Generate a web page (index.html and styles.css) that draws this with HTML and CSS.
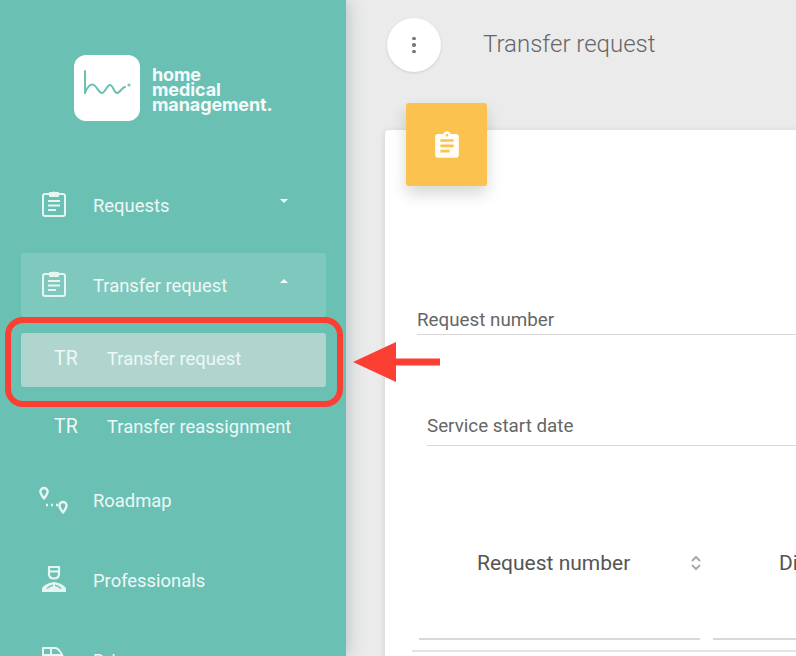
FILE: index.html
```html
<!DOCTYPE html>
<html lang="en">
<head>
    <meta charset="UTF-8">
    <meta name="viewport" content="width=device-width, initial-scale=1.0">
    <title>Transfer request - Home Medical Management</title>
    <link rel="stylesheet" href="styles.css">
</head>
<body>
    <aside class="sidebar">
        <div class="brand">
            <div class="brand-mark">
                <svg width="50" height="36" viewBox="0 0 50 36" fill="none" stroke="#6bc0b4" stroke-width="2" stroke-linecap="round" stroke-linejoin="round">
                    <path d="M3 1v22"/>
                    <path d="M3 23C5 17 9 13 12 15S17 23 20 23 25 15 28 15 32 23 35 23 40 17 43 17"/>
                    <circle cx="47" cy="15" r=".6"/>
                </svg>
            </div>
            <div class="brand-name">home<br>medical<br>management.</div>
        </div>

        <nav class="nav">
            <a class="nav-item">
                <svg class="nav-icon" viewBox="0 0 24 27"><rect x="1" y="4" width="22" height="22" rx="2"/><path d="M8 6V3h3a1.500 1.500 0 0 1 2 0h3v3zM6 11h12M6 15.500h12M6 20h8"/></svg>
                <span class="nav-label">Requests</span>
                <span class="caret"></span>
            </a>
            <a class="nav-item open">
                <svg class="nav-icon" viewBox="0 0 24 27"><rect x="1" y="4" width="22" height="22" rx="2"/><path d="M8 6V3h3a1.500 1.500 0 0 1 2 0h3v3zM6 11h12M6 15.500h12M6 20h8"/></svg>
                <span class="nav-label">Transfer request</span>
                <span class="caret up"></span>
            </a>
            <a class="sub-item selected"><span class="sub-code">TR</span>Transfer request</a>
            <a class="sub-item last"><span class="sub-code">TR</span>Transfer reassignment</a>
            <a class="nav-item">
                <svg class="nav-icon icon-roadmap" viewBox="0 0 30 30">
                    <path d="M6 2a3.600 3.600 0 0 0-3.600 3.600C2.400 8 6 12.500 6 12.500S9.600 8 9.600 5.600A3.600 3.600 0 0 0 6 2z"/>
                    <path d="M25 16a3.600 3.600 0 0 0-3.600 3.600c0 2.400 3.600 6.900 3.600 6.900s3.600-4.500 3.600-6.900A3.600 3.600 0 0 0 25 16z"/>
                    <path class="dots" d="M8 19h2M13 19h2M18 19h2"/>
                </svg>
                <span class="nav-label">Roadmap</span>
            </a>
            <a class="nav-item">
                <svg class="nav-icon icon-person" viewBox="0 0 26 28">
                    <path d="M8 2h10v7c0 3-2 4.500-5 4.500S8 12 8 9zM8 6.500h10"/>
                    <path class="solid" d="M1 27v-3c0-3 6-6 12-7 6 1 12 4 12 7v3z"/>
                    <path class="cut" d="M6 23.500c2-2 4-3 6-3.300M14 20.200c2 .3 4 1.300 6 3.300"/>
                </svg>
                <span class="nav-label">Professionals</span>
            </a>
            <a class="nav-item">
                <svg class="nav-icon" viewBox="0 0 24 27"><path d="M1 20V3h12c4 0 6 4 8 9v8zM1 10h20M9 3v7"/></svg>
                <span class="nav-label">Drivers</span>
            </a>
        </nav>
    </aside>

    <main class="content">
        <header class="topbar">
            <button class="menu-btn"><span></span><span></span><span></span></button>
            <h1 class="page-title">Transfer request</h1>
        </header>

        <section class="card">
            <div class="card-tile">
                <svg width="24" height="29" viewBox="3 0 18 22"><path fill="#fffdf6" d="M19 3h-4.180C14.400 1.840 13.300 1 12 1s-2.400.840-2.820 2H5c-1.100 0-2 .900-2 2v14c0 1.100.900 2 2 2h14c1.100 0 2-.900 2-2V5c0-1.100-.900-2-2-2zm-7 0c.550 0 1 .450 1 1s-.450 1-1 1-1-.450-1-1 .450-1 1-1zm2 14H7v-2h7v2zm3-4H7v-2h10v2zm0-4H7V7h10v2z"/></svg>
            </div>

            <div class="field field-number">Request number</div>
            <div class="field field-date">Service start date</div>

            <div class="table-head">
                <div class="col col-first">Request number
                    <svg class="sort" width="12" height="18" viewBox="0 0 12 18" fill="none" stroke="#aaa" stroke-width="2"><path d="M2 7l4-4 4 4M2 11l4 4 4-4"/></svg>
                </div>
                <div class="col col-second">Di</div>
            </div>
            <div class="filters">
                <div class="filter filter-first"></div>
                <div class="filter filter-second"></div>
            </div>
            <div class="table-rule"></div>
        </section>
    </main>

    <div class="callout-box"></div>
    <svg class="callout-arrow" width="88" height="40" viewBox="0 0 88 40"><path fill="#fb3f33" d="M0 20L43 0v16.500h44v7H43V40z"/></svg>
</body>
</html>
```

FILE: styles.css
```css
:root {
    --teal: #6bc0b4;
    --grey-bg: #ebebeb;
    --line: #d8d8d8;
    --red: #fb3f33;
}

* {
    box-sizing: border-box;
}

body {
    margin: 0;
    width: 796px;
    height: 656px;
    overflow: hidden;
    display: flex;
    background: var(--grey-bg);
    font-family: Roboto, sans-serif;
}

.sidebar {
    flex: 0 0 346px;
    height: 656px;
    overflow: hidden;
    background: var(--teal);
    box-shadow: 0 0 18px rgba(60, 90, 110, 0.35);
    position: relative;
    z-index: 1;
}

.brand {
    display: flex;
    align-items: center;
    gap: 12px;
    padding: 55px 0 0 74px;
}

.brand-mark {
    width: 66px;
    height: 66px;
    background: #fff;
    border-radius: 12px;
    display: flex;
    align-items: center;
    justify-content: center;
}

.brand-name {
    margin-top: 2px;
    color: #f4fbfa;
    font-family: Inter, sans-serif;
    font-size: 18px;
    font-weight: 700;
    line-height: 15px;
    letter-spacing: -0.1px;
}

.nav {
    margin-top: 52px;
    padding: 0 20px 0 21px;
    display: flex;
    flex-direction: column;
}

.nav-item {
    height: 64px;
    margin-bottom: 16px;
    display: flex;
    align-items: center;
    position: relative;
    padding-left: 21px;
    border-radius: 3px;
    color: #eef8f6;
    flex-shrink: 0;
}

.nav-item.open {
    background: rgba(255, 255, 255, 0.13);
}

.nav-icon {
    width: 24px;
    height: 27px;
    margin-top: -3px;
    fill: none;
    stroke: #e6f5f2;
    stroke-width: 2;
    stroke-linejoin: round;
    flex-shrink: 0;
}

.icon-roadmap {
    width: 30px;
    height: 30px;
    margin: 1px -2px 0 -4px;
    stroke-width: 2.4;
}

.icon-roadmap .dots {
    stroke-width: 2.600;
}

.icon-person {
    width: 26px;
    height: 28px;
    margin: -2px -1px 0 -1px;
    stroke-width: 2.2;
}

.icon-person .solid {
    fill: #e6f5f2;
    stroke: none;
}

.icon-person .cut {
    stroke: var(--teal);
    stroke-width: 1.400;
}

.nav-label {
    margin-left: 27px;
    font-size: 18.4px;
    font-weight: 400;
}

.caret {
    position: absolute;
    right: 38px;
    top: 26px;
    border-left: 4px solid transparent;
    border-right: 4px solid transparent;
    border-top: 4px solid #f4fbfa;
}

.caret.up {
    border-top: 0;
    border-bottom: 4px solid #f4fbfa;
}

.sub-item {
    height: 54px;
    margin-bottom: 12px;
    display: flex;
    align-items: center;
    padding-left: 33px;
    border-radius: 3px;
    color: #eef8f6;
    font-size: 18.4px;
    flex-shrink: 0;
}

.sub-item.selected {
    background: #b0d5cf;
    padding-bottom: 4px;
}

.sub-item.last {
    margin-bottom: 15px;
}

.sub-code {
    width: 53px;
    font-size: 19.5px;
}

.content {
    flex: 1;
    min-width: 0;
    padding: 18px 0 0 39px;
    overflow: hidden;
}

.topbar {
    display: flex;
    align-items: center;
    gap: 42px;
    padding-left: 2px;
    height: 54px;
}

.menu-btn {
    width: 54px;
    height: 54px;
    padding: 0;
    border: none;
    border-radius: 50%;
    background: #fff;
    box-shadow: 0 1px 3px rgba(0, 0, 0, 0.12);
    display: flex;
    flex-direction: column;
    align-items: center;
    justify-content: center;
    gap: 3px;
}

.menu-btn span {
    width: 3.500px;
    height: 3.500px;
    border-radius: 50%;
    background: #777;
}

.page-title {
    margin: -2px 0 0;
    font-size: 24px;
    font-weight: 300;
    color: #666;
}

.card {
    margin-top: 58px;
    width: 460px;
    height: 560px;
    background: #fff;
    border-radius: 4px 0 0 0;
    box-shadow: 0 1px 6px rgba(0, 0, 0, 0.12);
}

.card-tile {
    width: 81px;
    height: 83px;
    margin-left: 21px;
    position: relative;
    top: -27px;
    background: #fcc24f;
    border-radius: 3px;
    box-shadow: 0 8px 16px rgba(0, 0, 0, 0.16);
    display: flex;
    align-items: center;
    justify-content: center;
}

.field {
    color: #666;
    font-size: 18.8px;
    line-height: 24px;
    padding-bottom: 2px;
    border-bottom: 1px solid var(--line);
}

.field-number {
    margin: 95px 0 0 32px;
}

.field-date {
    margin: 79px 0 0 42px;
    padding-bottom: 7px;
}

.table-head {
    display: flex;
    margin-top: 103px;
    color: #555;
    font-size: 21px;
    line-height: 28px;
}

.col-first {
    width: 394px;
    padding-left: 92px;
    position: relative;
}

.sort {
    position: absolute;
    left: 305px;
    top: 5px;
}

.filters {
    display: flex;
    gap: 13px;
    margin: 61px 0 0 34px;
}

.filter {
    height: 2px;
    background: var(--line);
}

.filter-first {
    width: 281px;
}

.filter-second {
    flex: 1;
}

.table-rule {
    height: 2px;
    margin: 10px 0 0 27px;
    background: #e4e4e4;
}

.callout-box {
    position: absolute;
    left: 5px;
    top: 317px;
    width: 338px;
    height: 90px;
    border: 6px solid var(--red);
    border-radius: 18px;
    z-index: 2;
}

.callout-arrow {
    position: absolute;
    left: 353px;
    top: 342px;
    z-index: 2;
}
```
